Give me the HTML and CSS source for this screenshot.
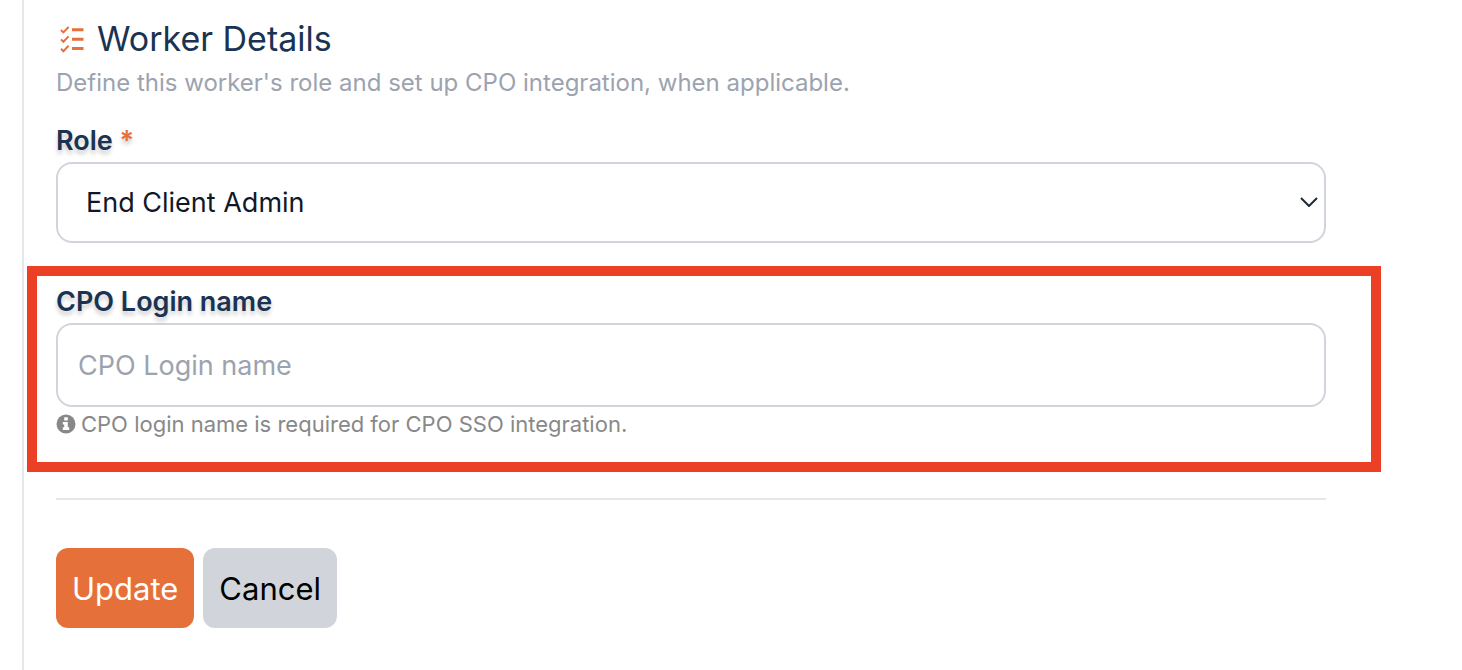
FILE: index.html
```html
<!DOCTYPE html>
<html lang="en">
<head>
    <meta charset="UTF-8">
    <meta name="viewport" content="width=device-width, initial-scale=1.0">
    <title>Worker Details</title>
    <link rel="stylesheet" href="styles.css">
</head>
<body>

    <main class="panel">
        <form>
            <h2>
                <svg class="list-icon" viewBox="0 0 24 28" aria-hidden="true">
                    <path class="check" d="M1 5L3.4 7.4L8.6 2M1 14.4L3.4 16.8L8.6 11.4M1 23.8L3.4 26.2L8.6 20.8"/>
                    <path class="bar" d="M12 4.8H23.5M12 14.3H23.5M12 23.6H23.5"/>
                </svg>
                Worker Details
            </h2>
            <p class="subtitle">Define this worker's role and set up CPO integration, when applicable.</p>

            <label for="role">Role <span class="required">*</span></label>
            <div class="select-wrap">
                <select id="role" name="role" required>
                    <option>End Client Admin</option>
                </select>
                <svg class="chevron" viewBox="0 0 18 10" aria-hidden="true">
                    <path d="M1 1L9 9L17 1"/>
                </svg>
            </div>

            <!-- Highlighted SSO field -->
            <div class="highlight">
                <label for="cpoLogin">CPO Login name</label>
                <input type="text" id="cpoLogin" name="cpoLogin" placeholder="CPO Login name">
                <p class="hint">
                    <svg class="info-icon" viewBox="0 0 20 20" aria-hidden="true">
                        <circle cx="10" cy="10" r="9.5"/>
                        <path d="M8.2 3.2H11.8V6.5H8.2ZM6.8 8H11.8V13.2H13.2V16H6.8V13.2H8.2V10.6H6.8Z"/>
                    </svg>
                    CPO login name is required for CPO SSO integration.
                </p>
            </div>

            <hr>

            <div class="actions">
                <button type="submit" class="btn-update">Update</button>
                <button type="button" class="btn-cancel">Cancel</button>
            </div>
        </form>
    </main>

</body>
</html>
```

FILE: styles.css
```css
* {
    box-sizing: border-box;
}
body {
    margin: 0;
    background-color: #fff;
    color: #1a3353;
    font-family: Inter, "Liberation Sans", sans-serif;
}
.panel {
    min-height: 100vh;
    margin-left: 22px;
    padding: 16px 136px 40px 32px;
    border-left: 2px solid #e5e7eb;
}
h2 {
    display: flex;
    align-items: center;
    gap: 13px;
    margin: 0;
    padding-left: 4px;
    font-size: 34px;
    font-weight: 400;
    line-height: 46px;
}
.list-icon {
    width: 24px;
    height: 28px;
    fill: none;
    stroke: #e5703a;
}
.list-icon .check {
    stroke-width: 2;
}
.list-icon .bar {
    stroke-width: 3;
}
.subtitle {
    margin: 5px 0 24px;
    color: #9ca3af;
    font-size: 24px;
    line-height: 32px;
}
label {
    display: block;
    height: 39px;
    font-size: 27px;
    font-weight: 600;
    line-height: 36px;
    text-shadow: 0 4px 4px rgba(0, 0, 0, 0.2);
}
.required {
    color: #e5703a;
}
.select-wrap {
    position: relative;
}
select, input[type="text"] {
    display: block;
    width: 100%;
    border: 2px solid #d1d5db;
    border-radius: 16px;
    background-color: #fff;
    font-family: inherit;
    font-size: 27px;
}
select {
    height: 81px;
    padding: 0 48px 0 28px;
    color: #111827;
    appearance: none;
}
input[type="text"] {
    height: 84px;
    padding: 0 20px;
}
input::placeholder {
    color: #9ca3af;
    opacity: 1;
}
.chevron {
    position: absolute;
    top: 35px;
    right: 8px;
    width: 18px;
    height: 10px;
    fill: none;
    stroke: #1f2937;
    stroke-width: 2;
    pointer-events: none;
}

/* The frame reaches past the form column on both sides */
.highlight {
    margin: 23px -55px 26px -29px;
    padding: 8px 45px 22px 19px;
    border: 10px solid #eb4026;
}
.hint {
    display: flex;
    align-items: center;
    gap: 5px;
    margin: 1px 0 0;
    color: #888;
    font-size: 22px;
    line-height: 32px;
}
.info-icon {
    width: 20px;
    height: 20px;
    fill: #888;
}
.info-icon path {
    fill: #fff;
}
hr {
    margin: 0 0 48px;
    border: 0;
    border-top: 2px solid #e5e7eb;
}
.actions {
    display: flex;
    gap: 9px;
}
button {
    height: 80px;
    padding: 0 16px;
    border: 0;
    border-radius: 12px;
    font-family: inherit;
    font-size: 31px;
}
.btn-update {
    background-color: #e5703a;
    color: #fff;
}
.btn-cancel {
    background-color: #d1d5db;
    color: #000;
}
```
